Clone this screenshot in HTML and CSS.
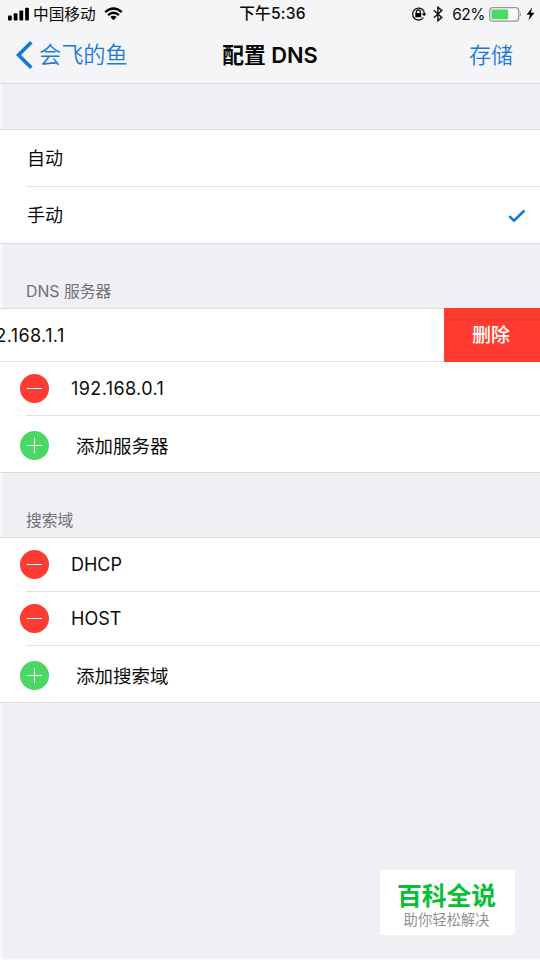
FILE: index.html
```html
<!DOCTYPE html>
<html lang="zh-CN">
<head>
<meta charset="utf-8">
<title>配置 DNS</title>
<link rel="stylesheet" href="styles.css">
</head>
<body>
<div class="screen">
  <header class="top">
    <div class="status">
      <div class="status-left">
        <svg class="signal" width="22" height="14" viewBox="0 0 22 14"><rect x="0" y="8.5" width="3.8" height="5" rx="1"/><rect x="5.7" y="6.3" width="3.8" height="7.2" rx="1"/><rect x="11.4" y="3.6" width="3.8" height="9.9" rx="1"/><rect x="17.1" y="0.8" width="3.8" height="12.7" rx="1"/></svg>
        <span class="carrier">中国移动</span>
        <svg class="wifi" width="19" height="14" viewBox="0 0 19 14"><path d="M1.2 5.1Q9.5-2.2 17.8 5.1M4.1 8.1Q9.5 3.4 14.9 8.1" fill="none" stroke="#000" stroke-width="2.3"/><path d="M9.5 13.2 6.3 10Q9.5 7.6 12.7 10Z"/></svg>
      </div>
      <div class="clock">下午5:36</div>
      <div class="status-right">
        <svg width="16" height="14" viewBox="0 0 16 14"><g fill="none" stroke="#111" stroke-width="1.3"><path d="M12.5 3.5A6 6 0 1 0 12.4 10.7"/><path d="M12.5 3.5A6 6 0 0 1 13.1 7.4"/><path d="M5.3 6.7V5a2 2 0 0 1 4 0v1.7"/></g><rect x="4.3" y="6" width="6" height="4.2" rx=".5"/><path d="M10.8 6.5h4.6L13.1 9.2Z"/></svg>
        <svg class="bt" width="10" height="16" viewBox="0 0 10 16"><path d="M.8 4.3 8.8 11.4 4.9 14.8V1.2L8.8 4.6.8 11.7" fill="none" stroke="#111" stroke-width="1.4"/></svg>
        <span class="percent">62%</span>
        <svg class="battery" width="34" height="15" viewBox="0 0 34 15"><rect x=".7" y=".7" width="29" height="13.4" rx="3" fill="#f8f8fa" stroke="#98989c" stroke-width="1.3"/><rect x="2.5" y="2.6" width="16.7" height="9.6" rx="1" fill="#4cd964"/><path d="M31 5q2 2.4 0 4.8Z" fill="#98989c"/></svg>
        <svg class="bolt" width="9" height="14" viewBox="0 0 9 14"><path d="M6.2.5.5 7.7h3.4L2.5 13.3 8.5 5.8H4.9Z"/></svg>
      </div>
    </div>
    <nav class="nav">
      <a class="back"><svg width="18" height="28" viewBox="0 0 18 28"><path d="M16.3 1.3 3.5 14 16.3 26.7" fill="none" stroke="#1179db" stroke-width="3.6"/></svg><span>会飞的鱼</span></a>
      <h1>配置 DNS</h1>
      <a class="save">存储</a>
    </nav>
  </header>

  <section class="group modes">
    <div class="row"><span>自动</span></div>
    <div class="row"><span>手动</span><svg class="check" width="18" height="14" viewBox="0 0 18 14"><path d="M1.3 7.1 6 11.7 16.4 1.5" fill="none" stroke="#1675d8" stroke-width="2.5"/></svg></div>
  </section>

  <h2>DNS 服务器</h2>
  <section class="group">
    <div class="row swiped"><span>192.168.1.1</span><button>删除</button></div>
    <div class="row item"><i class="dot minus"></i><span class="num">192.168.0.1</span></div>
    <div class="row add"><i class="dot plus"></i><span>添加服务器</span></div>
  </section>

  <h2>搜索域</h2>
  <section class="group">
    <div class="row item first"><i class="dot minus"></i><span>DHCP</span></div>
    <div class="row item"><i class="dot minus"></i><span>HOST</span></div>
    <div class="row add"><i class="dot plus"></i><span>添加搜索域</span></div>
  </section>

  <aside class="brand"><strong>百科全说</strong><span>助你轻松解决</span></aside>
</div>
</body>
</html>
```
FILE: styles.css
```css
* { box-sizing: border-box; }
body {
  margin: 0;
  background: #efeff4;
  color: #0b0b0b;
  font: 18px/26px Inter, "Noto Sans CJK SC", sans-serif;
}
.screen {
  position: relative;
  width: 540px;
  height: 960px;
  overflow: hidden;
  border-bottom: 1px solid #f9f9fb;
  background: linear-gradient(90deg, #f9f9fb 2px, #efeff4 2px);
}
.top {
  height: 84px;
  background: #f5f5f8;
  border-bottom: 1px solid #d5d5d8;
}
.status {
  display: grid;
  grid-template-columns: 1fr auto 1fr;
  height: 28px;
  align-items: center;
  padding: 0 5px 0 8px;
  font-size: 15px;
  line-height: 20px;
}
.status-left, .status-right { display: flex; align-items: center; }
.status-right { justify-content: flex-end; }
.carrier { margin-left: 3px; padding-top: 1px; font-size: 15.7px; }
.wifi { margin-left: 8px; }
.clock { padding-left: 2px; font-size: 15.6px; font-weight: 500; letter-spacing: .2px; }
.bt { margin-left: 6px; }
.percent { margin-left: 9px; padding-top: 1px; font-size: 15.5px; letter-spacing: -.5px; }
.battery { margin-left: 4px; }
.bolt { margin-left: 3px; }
.nav {
  display: grid;
  grid-template-columns: 1fr auto 1fr;
  align-items: center;
  height: 54px;
  padding: 0 15px;
  color: #1a7bd6;
  font-size: 22px;
}
.back { display: flex; align-items: center; gap: 6px; font-weight: 350; }
.back span { font-size: 22.2px; }
.nav h1 {
  margin: 0;
  color: #080808;
  font-size: 21.8px;
  font-weight: 600;
  line-height: 28px;
}
.save { justify-self: end; margin-right: 12px; font-weight: 350; }
.group {
  background: #fff;
  border-top: 1px solid #dcdce0;
  border-bottom: 1px solid #dcdce0;
}
.modes { margin-top: 45px; }
.row {
  position: relative;
  display: flex;
  align-items: center;
  height: 54px;
  padding-left: 27px;
}
.row + .row::before {
  content: "";
  position: absolute;
  top: 0;
  left: 26px;
  right: 0;
  height: 1px;
  background: #e2e2e5;
}
.modes .row { height: 56px; padding-top: 2px; }
.modes .row + .row { height: 57px; }
.check { margin: 0 14px 0 auto; }
h2 {
  height: 64px;
  margin: 0;
  padding: 35px 0 0 26px;
  color: #717176;
  font-size: 15.8px;
  font-weight: 400;
  line-height: 26px;
}
.item { padding: 1px 0 0 20px; }
.item span { margin-left: 22px; }
.first { height: 53px; padding-top: 0; }
.add { height: 57px; padding: 4px 0 0 20px; }
.add span { margin-left: 27px; font-size: 18.5px; }
.swiped { height: 52px; padding: 0; justify-content: space-between; }
.swiped span { margin: 2px 0 0 -24px; letter-spacing: .4px; }
.num { letter-spacing: .4px; }
.swiped + .row::before { left: 0; }
.swiped button {
  z-index: 1;
  width: 96px;
  height: 54px;
  margin: -1px 0;
  border: 0;
  padding: 2px 2px 0 0;
  background: #ff3b30;
  color: #fff;
  font: 500 19px/26px Inter, "Noto Sans CJK SC", sans-serif;
}
.dot {
  display: grid;
  place-items: center;
  width: 29px;
  height: 29px;
  border-radius: 50%;
}
.dot::before, .dot::after { content: ""; grid-area: 1 / 1; background: #fff; }
.dot::before { width: 15px; height: 1.5px; }
.minus { background: #fc3b31; }
.plus { background: #4cd764; }
.plus::after { width: 1.5px; height: 15px; }
.brand {
  position: absolute;
  left: 380px;
  top: 870px;
  display: flex;
  flex-direction: column;
  align-items: center;
  width: 135px;
  height: 65px;
  padding: 13px 2px 0 0;
  background: #fff;
}
.brand strong { color: #06bf36; font-size: 24.8px; line-height: 27px; font-weight: 700; }
.brand span { color: #929292; font-size: 14.3px; line-height: 20px; }
```
